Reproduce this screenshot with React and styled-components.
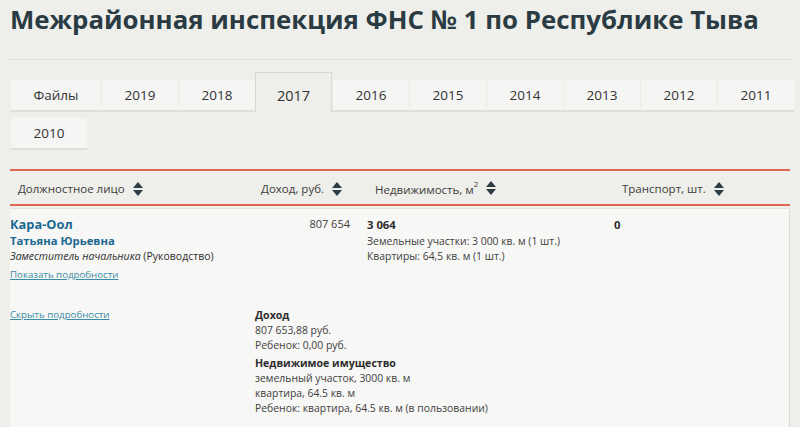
import React, { useState } from 'react'
import styled, { createGlobalStyle } from 'styled-components'

const GlobalStyle = createGlobalStyle`
  body {
    margin: 0;
    background: #eeeeea;
    font-family: 'Open Sans', 'Noto Sans', sans-serif;
    color: #3d3d3d;
  }
`

const Page = styled.div`
  padding: 0 10px;
  width: 780px;
`

const Title = styled.h1`
  margin: 0;
  padding-top: 1px;
  font-size: 25.8px;
  font-weight: 700;
  color: #2a3b43;
  line-height: 36px;
  white-space: nowrap;
  padding-bottom: 22px;
  border-bottom: 1px dotted #d2d2cc;
`

const Tabs = styled.div`
  display: flex;
  flex-wrap: wrap;
  align-items: flex-end;
  row-gap: 6px;
  width: 790px;
  margin-top: 12px;
`

const Tab = styled.div`
  box-sizing: border-box;
  width: ${p => (p.wide ? 91 : 77)}px;
  height: ${p => (p.active ? 40 : 32)}px;
  display: flex;
  align-items: center;
  justify-content: center;
  font-size: ${p => (p.active ? 14.5 : 13.5)}px;
  color: #333;
  background: ${p => (p.active ? '#eeeeea' : '#f5f5f3')};
  border: ${p => (p.active ? '1px solid #d9d9d4' : 'none')};
  border-bottom: ${p => (p.active ? 'none' : '2px solid #dededa')};
  border-left: ${p => (p.active ? '1px solid #d9d9d4' : '1px solid #ebebe7')};
  padding-top: ${p => (p.active ? 6 : 0)}px;
  cursor: pointer;
`

const Table = styled.div`
  margin-top: 19px;
  width: 780px;
`

const cols = '245px 104px 247px 1fr'

const HeadRow = styled.div`
  display: grid;
  grid-template-columns: ${cols};
  height: 31px;
  padding-top: 2px;
  align-items: center;
  border-top: 2px solid #de684d;
  border-bottom: 2px solid #de684d;
`

const HeadCell = styled.div`
  display: flex;
  align-items: center;
  justify-content: ${p => (p.right ? 'flex-end' : 'flex-start')};
  gap: 8px;
  font-size: 11.5px;
  color: #3d3d3d;
  padding: ${p => p.pad};
  sup {
    font-size: 8px;
    position: relative;
    top: -2px;
  }
`

const SortIcon = () => (
  <svg width="10" height="14" viewBox="0 0 10 14">
    <path d="M5 0 L10 6 H0 Z" fill="#2d3b42" />
    <path d="M5 14 L10 8 H0 Z" fill="#2d3b42" />
  </svg>
)

const Panel = styled.div`
  margin-top: 2px;
  background: #f7f7f5;
  border-top: 1px solid #e2e2de;
  border-right: 1px solid #dcdcd8;
  height: 220px;
`

const Row = styled.div`
  display: grid;
  grid-template-columns: ${cols};
  padding-top: 6px;
`

const Cell = styled.div`
  padding: 0 ${p => (p.right ? 9 : 8)}px 0 ${p => (p.flush ? 0 : 8)}px;
  text-align: ${p => (p.right ? 'right' : 'left')};
`

const Surname = styled.div`
  font-size: 12.8px;
  font-weight: 700;
  color: #1a6791;
  line-height: 18px;
`

const Name = styled.div`
  font-size: 11.3px;
  font-weight: 700;
  color: #1a6791;
  line-height: 16px;
`

const Position = styled.div`
  font-size: 10.5px;
  line-height: 14px;
  color: #2e2e2e;
  em {
    font-style: italic;
  }
`

const Link = styled.a`
  display: block;
  width: max-content;
  font-size: 9.7px;
  line-height: 14px;
  color: #3a8ca6;
  text-decoration: underline;
  cursor: pointer;
  margin-top: ${p => p.mt || 0}px;
`

const Income = styled.div`
  font-size: 11px;
  color: #3d3d3d;
  line-height: 17px;
`

const Strong = styled.div`
  font-size: 11.3px;
  font-weight: 700;
  color: #2e2e2e;
  line-height: 19px;
`

const Small = styled.div`
  font-size: 10.4px;
  color: #404040;
  line-height: 15px;
`

const Details = styled.div`
  display: grid;
  grid-template-columns: 245px 1fr;
  margin-top: 26px;
`

const DetailHead = styled.div`
  font-size: 10.6px;
  font-weight: 700;
  color: #2e2e2e;
  line-height: 15px;
  margin-top: ${p => p.mt || 0}px;
`

const years = ['2019', '2018', '2017', '2016', '2015', '2014', '2013', '2012', '2011', '2010']

const App = () => {
  const [active, setActive] = useState('2017')
  return (
    <Page>
      <GlobalStyle />
      <Title>Межрайонная инспекция ФНС № 1 по Республике Тыва</Title>
      <Tabs>
        <Tab wide onClick={() => setActive('files')} active={active === 'files'}>Файлы</Tab>
        {years.map(y => (
          <Tab key={y} active={active === y} onClick={() => setActive(y)}>{y}</Tab>
        ))}
      </Tabs>
      <Table>
        <HeadRow>
          <HeadCell pad="0 8px">Должностное лицо <SortIcon /></HeadCell>
          <HeadCell right pad="0 17px 0 0">Доход, руб. <SortIcon /></HeadCell>
          <HeadCell pad="0 8px 0 16px"><span>Недвижимость, м<sup>2</sup></span> <SortIcon /></HeadCell>
          <HeadCell pad="0 8px 0 16px">Транспорт, шт. <SortIcon /></HeadCell>
        </HeadRow>
        <Panel>
          <Row>
            <Cell flush>
              <Surname>Кара-Оол</Surname>
              <Name>Татьяна Юрьевна</Name>
              <Position><em>Заместитель начальника</em> (Руководство)</Position>
              <Link mt={5}>Показать подробности</Link>
            </Cell>
            <Cell right>
              <Income>807 654</Income>
            </Cell>
            <Cell>
              <Strong>3 064</Strong>
              <Small>Земельные участки: 3 000 кв. м (1 шт.)</Small>
              <Small>Квартиры: 64,5 кв. м (1 шт.)</Small>
            </Cell>
            <Cell>
              <Strong>0</Strong>
            </Cell>
          </Row>
          <Details>
            <div>
              <Link>Скрыть подробности</Link>
            </div>
            <div>
              <DetailHead>Доход</DetailHead>
              <Small>807 653,88 руб.</Small>
              <Small>Ребенок: 0,00 руб.</Small>
              <DetailHead mt={3}>Недвижимое имущество</DetailHead>
              <Small>земельный участок, 3000 кв. м</Small>
              <Small>квартира, 64.5 кв. м</Small>
              <Small>Ребенок: квартира, 64.5 кв. м (в пользовании)</Small>
            </div>
          </Details>
        </Panel>
      </Table>
    </Page>
  )
}

export default App
